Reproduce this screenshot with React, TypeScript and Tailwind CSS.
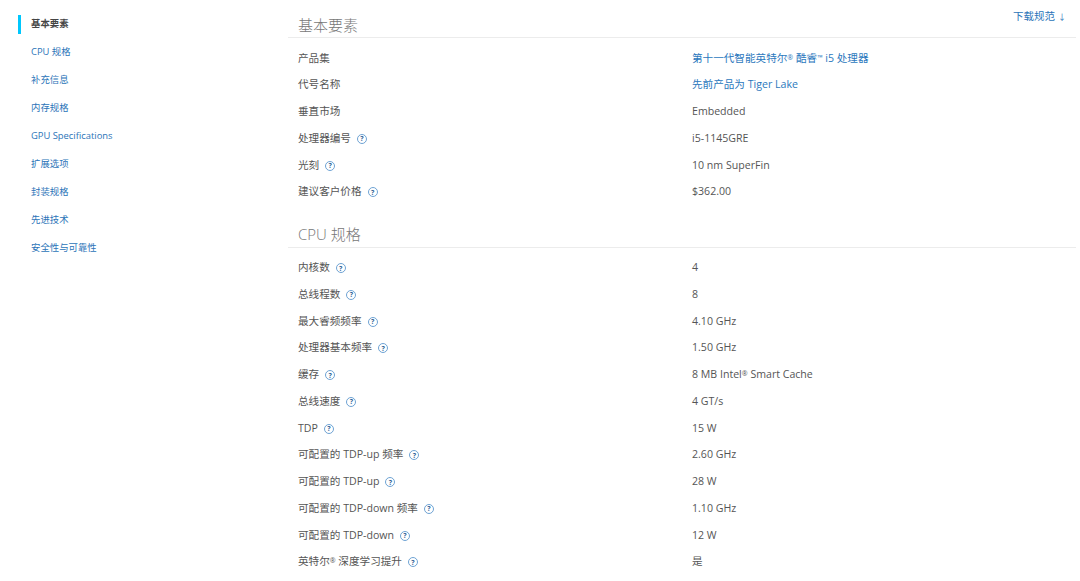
import { ReactNode } from "react";

type Row = { label: string; value: string; help?: boolean; link?: boolean };

const navItems = [
  "基本要素",
  "CPU 规格",
  "补充信息",
  "内存规格",
  "GPU Specifications",
  "扩展选项",
  "封装规格",
  "先进技术",
  "安全性与可靠性",
];

const essentials: Row[] = [
  { label: "产品集", value: "第十一代智能英特尔® 酷睿™ i5 处理器", link: true },
  { label: "代号名称", value: "先前产品为 Tiger Lake", link: true },
  { label: "垂直市场", value: "Embedded" },
  { label: "处理器编号", value: "i5-1145GRE", help: true },
  { label: "光刻", value: "10 nm SuperFin", help: true },
  { label: "建议客户价格", value: "$362.00", help: true },
];

const cpuSpecs: Row[] = [
  { label: "内核数", value: "4", help: true },
  { label: "总线程数", value: "8", help: true },
  { label: "最大睿频频率", value: "4.10 GHz", help: true },
  { label: "处理器基本频率", value: "1.50 GHz", help: true },
  { label: "缓存", value: "8 MB Intel® Smart Cache", help: true },
  { label: "总线速度", value: "4 GT/s", help: true },
  { label: "TDP", value: "15 W", help: true },
  { label: "可配置的 TDP-up 频率", value: "2.60 GHz", help: true },
  { label: "可配置的 TDP-up", value: "28 W", help: true },
  { label: "可配置的 TDP-down 频率", value: "1.10 GHz", help: true },
  { label: "可配置的 TDP-down", value: "12 W", help: true },
  { label: "英特尔® 深度学习提升", value: "是", help: true },
];

// ® and ™ sit small and raised in the original
function Marks({ text }: { text: string }) {
  return (
    <>
      {text.split(/([®™])/).map((part, i) =>
        part === "®" || part === "™" ? (
          <span key={i} className="relative top-[-2px] text-[7px]">
            {part}
          </span>
        ) : (
          part
        )
      )}
    </>
  );
}

function HelpIcon() {
  return (
    <span className="ml-[6px] flex h-[10px] w-[10px] items-center justify-center rounded-full border-[1.5px] border-[#6ea3d4] text-[7px] leading-none font-bold text-[#2f6396]">
      ?
    </span>
  );
}

function SpecRow({ label, value, help, link }: Row) {
  return (
    <div className="flex h-[26.75px] items-center">
      <div className="flex w-[404px] items-center pl-[10px] text-[#555]">
        <span>
          <Marks text={label} />
        </span>
        {help && <HelpIcon />}
      </div>
      <span className={link ? "text-[#2b78bd]" : "text-[#555]"}>
        <Marks text={value} />
      </span>
    </div>
  );
}

function Section({ title, children }: { title: string; children: ReactNode }) {
  return (
    <section>
      <h2 className="h-[24.5px] border-b border-[#ececec] pl-[10px] text-[15px] leading-[22px] font-light text-[#777]">
        {title}
      </h2>
      <div className="pt-[7.1px]">{children}</div>
    </section>
  );
}

export default function App() {
  return (
    <div className="relative flex h-[581px] w-[1080px] overflow-hidden bg-white font-['Open_Sans','Noto_Sans_CJK_SC',sans-serif] text-[10.6px]">
      {/* Side nav */}
      <nav className="w-[288px] shrink-0 pt-[10px] pl-[18px] text-[9.4px]">
        <ul className="text-[#2b74b8]">
          {navItems.map((item, i) => (
            <li key={item} className="flex h-[28px] items-center">
              {i === 0 ? (
                <div className="flex h-[19px] items-center border-l-[3px] border-[#00c7fd] pl-[10px] font-semibold text-[#444]">
                  {item}
                </div>
              ) : (
                <div className="pl-[13px]">{item}</div>
              )}
            </li>
          ))}
        </ul>
      </nav>

      {/* Spec tables */}
      <main className="w-[788px] pt-[13.7px]">
        <Section title="基本要素">
          {essentials.map((row) => (
            <SpecRow key={row.label} {...row} />
          ))}
        </Section>
        <div className="mt-[17.45px]">
          <Section title="CPU 规格">
            {cpuSpecs.map((row) => (
              <SpecRow key={row.label} {...row} />
            ))}
          </Section>
        </div>
      </main>

      <a className="absolute top-[9px] right-[14px] flex items-center text-[10.5px] text-[#2b74b8]">
        下载规范
        <span className="ml-[3px] text-[8px]">↓</span>
      </a>
    </div>
  );
}
